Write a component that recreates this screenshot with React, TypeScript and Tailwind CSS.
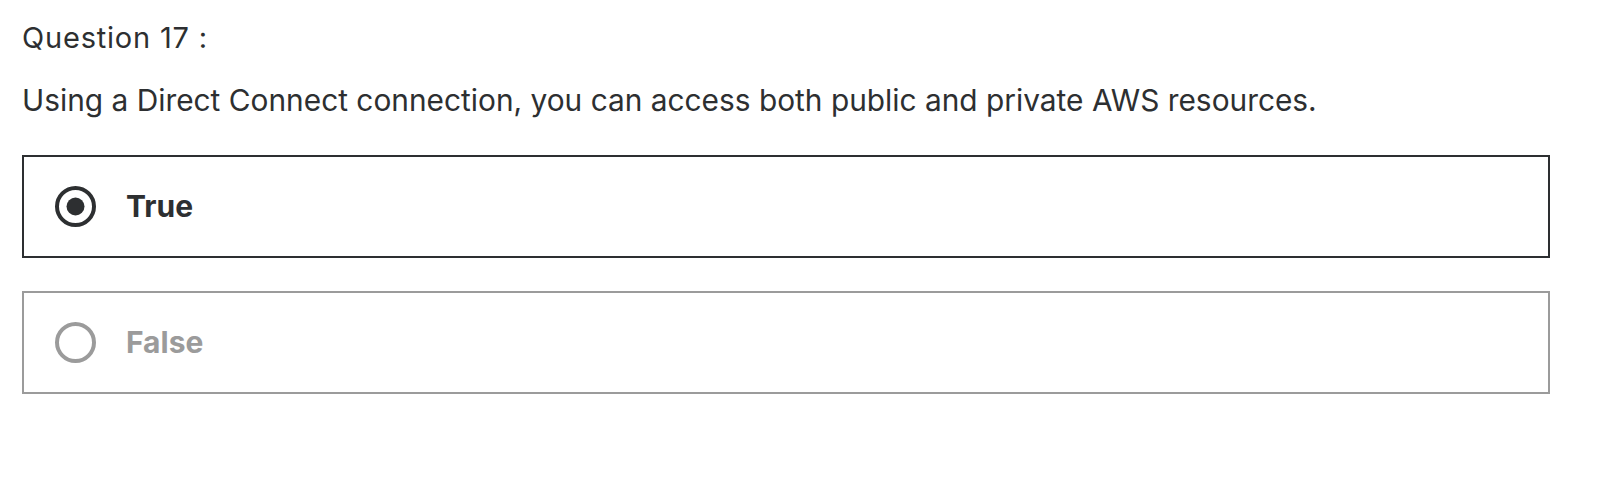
import React from "react";

function Radio({ checked }: { checked: boolean }) {
  return (
    <svg width="41" height="41" viewBox="0 0 41 41" className="shrink-0">
      <circle cx="20.5" cy="20.5" r="18.5" fill="none" stroke={checked ? "#2d2f31" : "#9b9b9b"} strokeWidth="4" />
      {checked && <circle cx="20.5" cy="20.5" r="9" fill="#2d2f31" />}
    </svg>
  );
}

export default function App() {
  return (
    <div className="w-[1604px] h-[494px] bg-white text-[#2d2f31] pl-[22px] pr-[54px] pt-[18px]" style={{ fontFamily: 'Inter, "Liberation Sans", Arial, sans-serif' }}>
      <div className="text-[29px] leading-[40px] tracking-[0.8px]">Question 17 :</div>
      <div className="text-[29.85px] leading-[40px] mt-[22px]">
        Using a Direct Connect connection, you can access both public and private AWS resources.
      </div>
      <div className="mt-[35px] flex flex-col gap-[33px]">
        <div className="h-[103px] border-2 border-[#2d2f31] flex items-center pl-[31px] gap-[30px]">
          <Radio checked />
          <span className="text-[30px] font-bold">True</span>
        </div>
        <div className="h-[103px] border-2 border-[#9b9b9b] flex items-center pl-[31px] gap-[30px] text-[#9b9b9b]">
          <Radio checked={false} />
          <span className="text-[30px] font-bold">False</span>
        </div>
      </div>
    </div>
  );
}
